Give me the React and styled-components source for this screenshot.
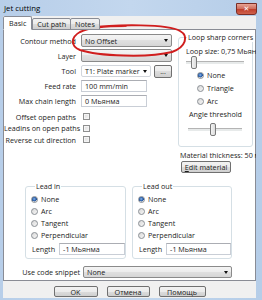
import React from "react";
import styled, { createGlobalStyle } from "styled-components";

const GlobalStyle = createGlobalStyle`
  html, body {
    margin: 0;
    padding: 0;
    background: #fff;
  }
  body {
    font-family: "Open Sans", "Noto Sans", sans-serif;
    font-size: 7.2px;
    color: #1c1c1c;
  }
  * {
    box-sizing: border-box;
  }
`;

const Window = styled.div`
  position: relative;
  width: 262px;
  height: 300px;
  display: flex;
  flex-direction: column;
  background: linear-gradient(90deg, #b7cee9, #c3d7ee 50%, #b5cde8);
  overflow: hidden;
`;

const TitleBar = styled.div`
  height: 16px;
  display: flex;
  align-items: flex-start;
  justify-content: space-between;
  padding: 0 5px 0 4px;
`;

const Title = styled.span`
  font-size: 7.8px;
  line-height: 16px;
  color: #000;
`;

const CloseButton = styled.div`
  width: 21px;
  height: 12px;
  margin-top: 3px;
  border: 1px solid #7b2e26;
  border-radius: 0 0 3px 3px;
  background: linear-gradient(#e8a394, #d0705f 45%, #c0402d 55%, #d0624d);
  display: flex;
  align-items: center;
  justify-content: center;
  color: #fff;
  font-family: "DejaVu Sans", sans-serif;
  font-weight: bold;
  font-size: 7px;
`;

const Client = styled.div`
  position: relative;
  width: 253px;
  height: 282px;
  margin-left: 3px;
  background: #f0f0f0;
  display: flex;
  flex-direction: column;
  overflow: hidden;
`;

const TabStrip = styled.div`
  height: 14px;
  margin-bottom: -1px;
  display: flex;
  align-items: flex-end;
  position: relative;
  z-index: 1;
`;

const Tab = styled.div`
  height: ${(p) => (p.$active ? 14 : 12)}px;
  padding: 0 ${(p) => (p.$active ? 5 : 4)}px;
  margin-right: ${(p) => (p.$active ? 0 : -1)}px;
  border: 1px solid #898c95;
  border-bottom-color: ${(p) => (p.$active ? "#fff" : "#898c95")};
  border-radius: 2px 2px 0 0;
  background: ${(p) =>
    p.$active ? "#fff" : "linear-gradient(#f2f2f2, #ebebeb 50%, #dddddd 50%, #cfcfcf)"};
  display: flex;
  align-items: center;
  white-space: nowrap;
`;

const Panel = styled.div`
  height: 252px;
  border: 1px solid #898c95;
  background: #fff;
  display: flex;
  flex-direction: column;
`;

const TopSection = styled.div`
  display: grid;
  grid-template-columns: 174px 75px;
  height: 145px;
`;

const Form = styled.div`
  padding-top: 4px;
  display: flex;
  flex-direction: column;
`;

const Row = styled.div`
  display: grid;
  grid-template-columns: 72px 1fr;
  column-gap: 5px;
  align-items: center;
  height: ${(p) => p.$h}px;
  margin-top: ${(p) => p.$mt || 0}px;
`;

const Label = styled.span`
  text-align: right;
  white-space: nowrap;
`;

const Field = styled.div`
  display: flex;
  align-items: center;
  gap: 3px;
`;

const Combo = styled.div`
  width: ${(p) => p.$w}px;
  height: ${(p) => p.$h || 13}px;
  border: 1px solid ${(p) => (p.$flat ? "#d2d6dc" : "#8a8a8a")};
  border-radius: 2px;
  background: ${(p) =>
    p.$flat ? "#fff" : "linear-gradient(#f4f4f4, #ececec 50%, #e0e0e0 50%, #d6d6d6)"};
  display: flex;
  align-items: center;
  justify-content: space-between;
  padding: 0 3px 0 3px;
  white-space: nowrap;
  overflow: hidden;
`;

const Arrow = styled.span`
  width: 0;
  height: 0;
  border-left: 2.5px solid transparent;
  border-right: 2.5px solid transparent;
  border-top: 3px solid #111;
`;

const Input = styled.div`
  width: ${(p) => p.$w}px;
  height: 12px;
  border: 1px solid #c9ced6;
  border-top-color: #abadb3;
  background: #fff;
  display: flex;
  align-items: center;
  padding-left: 3px;
  white-space: nowrap;
`;

const Button = styled.div`
  width: ${(p) => p.$w}px;
  height: ${(p) => p.$h || 12}px;
  margin-left: ${(p) => p.$ml || 0}px;
  border: 1px solid #707070;
  border-radius: 2px;
  background: linear-gradient(#f2f2f2, #ebebeb 50%, #dddddd 50%, #cfcfcf);
  display: flex;
  align-items: center;
  justify-content: center;
  white-space: nowrap;
  u {
    text-decoration: underline;
  }
`;

const CheckBox = styled.span`
  width: 7px;
  height: 7px;
  margin-left: 2px;
  border: 1px solid #8e8f8f;
  background: linear-gradient(135deg, #dcdcdc, #f6f6f6);
  box-shadow: inset 0 0 0 1px #f4f4f4;
`;

const RightColumn = styled.div`
  padding-top: 2px;
  display: flex;
  flex-direction: column;
`;

const Group = styled.fieldset`
  margin: 0;
  width: ${(p) => p.$w}px;
  height: ${(p) => p.$h}px;
  padding: ${(p) => p.$pad};
  border: 1px solid #d5dfe5;
  border-radius: 3px;
  display: flex;
  flex-direction: column;
  min-width: 0;
  legend {
    padding: 0 1px;
    margin-left: ${(p) => p.$lm || 3}px;
    line-height: 10px;
    white-space: nowrap;
  }
`;

const Text = styled.div`
  line-height: ${(p) => p.$lh || 10}px;
  margin-top: ${(p) => p.$mt || 0}px;
  margin-left: ${(p) => p.$ml || 0}px;
  text-align: ${(p) => p.$align || "left"};
  white-space: nowrap;
`;

const Slider = styled.div`
  position: relative;
  width: ${(p) => p.$w}px;
  height: 13px;
  margin-top: ${(p) => p.$mt || 0}px;
  margin-left: ${(p) => p.$ml || 0}px;
  &::before {
    content: "";
    position: absolute;
    left: 0;
    right: 0;
    top: 5px;
    height: 2px;
    border-top: 1px solid #b4b4b4;
    border-bottom: 1px solid #fff;
    background: #e7eaea;
  }
`;

const Thumb = styled.span`
  position: absolute;
  top: 0;
  width: 6px;
  height: 13px;
  border: 1px solid #7a7a7a;
  border-radius: 2px;
  background: linear-gradient(90deg, #f3f3f3, #dcdcdc);
`;

const RadioRow = styled.div`
  display: flex;
  align-items: center;
  gap: 3px;
  height: ${(p) => p.$h || 12}px;
  margin-left: ${(p) => p.$ml || 0}px;
  white-space: nowrap;
`;

const RadioDot = styled.span`
  width: 7px;
  height: 7px;
  border-radius: 50%;
  border: 1px solid #8a8f95;
  background: ${(p) =>
    p.$checked
      ? "radial-gradient(circle at 45% 40%, #8fb7e6 0, #3a6fb8 1.5px, #1d4f97 2.4px, #e4e4e4 2.6px)"
      : "linear-gradient(135deg, #d8d8d8, #f6f6f6)"};
`;

const LeadRow = styled.div`
  display: flex;
  justify-content: center;
  gap: 6px;
  margin-top: 6px;
  padding-right: 2px;
`;

const InlineRow = styled.div`
  display: flex;
  align-items: center;
  gap: ${(p) => p.$gap}px;
  margin-top: ${(p) => p.$mt || 0}px;
  margin-left: ${(p) => p.$ml || 0}px;
  height: 12px;
`;

const SnippetLabel = styled.span`
  width: 76px;
  text-align: right;
  white-space: nowrap;
`;

const ButtonRow = styled.div`
  display: flex;
  justify-content: center;
  gap: 9px;
  padding-top: 5px;
`;

const Annotation = styled.svg`
  position: absolute;
  left: 68px;
  top: 23px;
  pointer-events: none;
`;

function Radio({ label, checked, ml, h }) {
  return (
    <RadioRow $ml={ml} $h={h}>
      <RadioDot $checked={checked} />
      <span>{label}</span>
    </RadioRow>
  );
}

function LeadGroup({ title, w }) {
  return (
    <Group $w={w} $h={78} $pad="2px 0 0 5px" $lm={4}>
      <legend>{title}</legend>
      <Radio label="None" checked />
      <Radio label="Arc" />
      <Radio label="Tangent" />
      <Radio label="Perpendicular" />
      <InlineRow $gap={4} $mt={2} $ml={1}>
        <span>Length</span>
        <Input $w={66}>-1 Мьянма</Input>
      </InlineRow>
    </Group>
  );
}

export default function App() {
  return (
    <>
      <GlobalStyle />
      <Window>
        <TitleBar>
          <Title>Jet cutting</Title>
          <CloseButton>✕</CloseButton>
        </TitleBar>
        <Client>
          <TabStrip>
            <Tab $active>Basic</Tab>
            <Tab>Cut path</Tab>
            <Tab>Notes</Tab>
          </TabStrip>
          <Panel>
            <TopSection>
              <Form>
                <Row $h={13}>
                  <Label>Contour method</Label>
                  <Field>
                    <Combo $w={91}>
                      <span>No Offset</span>
                      <Arrow />
                    </Combo>
                  </Field>
                </Row>
                <Row $h={13} $mt={2}>
                  <Label>Layer</Label>
                  <Field>
                    <Combo $w={91}>
                      <span />
                      <Arrow />
                    </Combo>
                  </Field>
                </Row>
                <Row $h={14} $mt={2}>
                  <Label>Tool</Label>
                  <Field>
                    <Combo $w={70} $h={12} $flat>
                      <span>T1: Plate marker</span>
                      <Arrow />
                    </Combo>
                    <Button $w={18} $h={13}>...</Button>
                  </Field>
                </Row>
                <Row $h={12} $mt={2}>
                  <Label>Feed rate</Label>
                  <Field>
                    <Input $w={66}>100 mm/min</Input>
                  </Field>
                </Row>
                <Row $h={12} $mt={3}>
                  <Label>Max chain length</Label>
                  <Field>
                    <Input $w={66}>0 Мьянма</Input>
                  </Field>
                </Row>
                <Row $h={11} $mt={4}>
                  <Label>Offset open paths</Label>
                  <Field>
                    <CheckBox />
                  </Field>
                </Row>
                <Row $h={11} $mt={0.5}>
                  <Label>Leadins on open paths</Label>
                  <Field>
                    <CheckBox />
                  </Field>
                </Row>
                <Row $h={11} $mt={0.5}>
                  <Label>Reverse cut direction</Label>
                  <Field>
                    <CheckBox />
                  </Field>
                </Row>
              </Form>
              <RightColumn>
                <Group $w={75} $h={115} $pad="5px 0 0 7px" $lm={1}>
                  <legend>Loop sharp corners</legend>
                  <Text $lh={9}>Loop size: 0,75 Мьянма</Text>
                  <Slider $w={58}>
                    <Thumb style={{ left: 5 }} />
                  </Slider>
                  <Radio label="None" checked ml={11} h={12} />
                  <Radio label="Triangle" ml={11} h={14} />
                  <Radio label="Arc" ml={11} h={12} />
                  <Text $align="center" $mt={2} style={{ marginRight: 7 }}>
                    Angle threshold
                  </Text>
                  <Slider $w={54} $mt={4} $ml={2}>
                    <Thumb style={{ left: 22 }} />
                  </Slider>
                </Group>
                <Text $mt={3} $ml={2}>Material thickness: 50 мм</Text>
                <Button $w={50} $ml={3} $h={12} style={{ marginTop: 1 }}>
                  <span>
                    <u>E</u>dit material
                  </span>
                </Button>
              </RightColumn>
            </TopSection>
            <LeadRow>
              <LeadGroup title="Lead in" w={101} />
              <LeadGroup title="Lead out" w={100} />
            </LeadRow>
            <InlineRow $gap={3} $mt={7}>
              <SnippetLabel>Use code snippet</SnippetLabel>
              <Combo $w={149} $h={12}>
                <span>None</span>
                <Arrow />
              </Combo>
            </InlineRow>
          </Panel>
          <ButtonRow>
            <Button $w={44} $h={11}>OK</Button>
            <Button $w={43} $h={11}>Отмена</Button>
            <Button $w={47} $h={11}>Помощь</Button>
          </ButtonRow>
        </Client>
        <Annotation width="124" height="36" viewBox="0 0 124 36">
          <path
            d="M20 5 C 50 1, 100 1, 112 8 C 121 13, 118 24, 104 29 C 80 35, 30 33, 12 27 C 2 23, 3 14, 12 9 C 22 4, 40 3, 58 3"
            fill="none"
            stroke="#d01e1e"
            strokeWidth="2"
            strokeLinecap="round"
          />
        </Annotation>
      </Window>
    </>
  );
}
